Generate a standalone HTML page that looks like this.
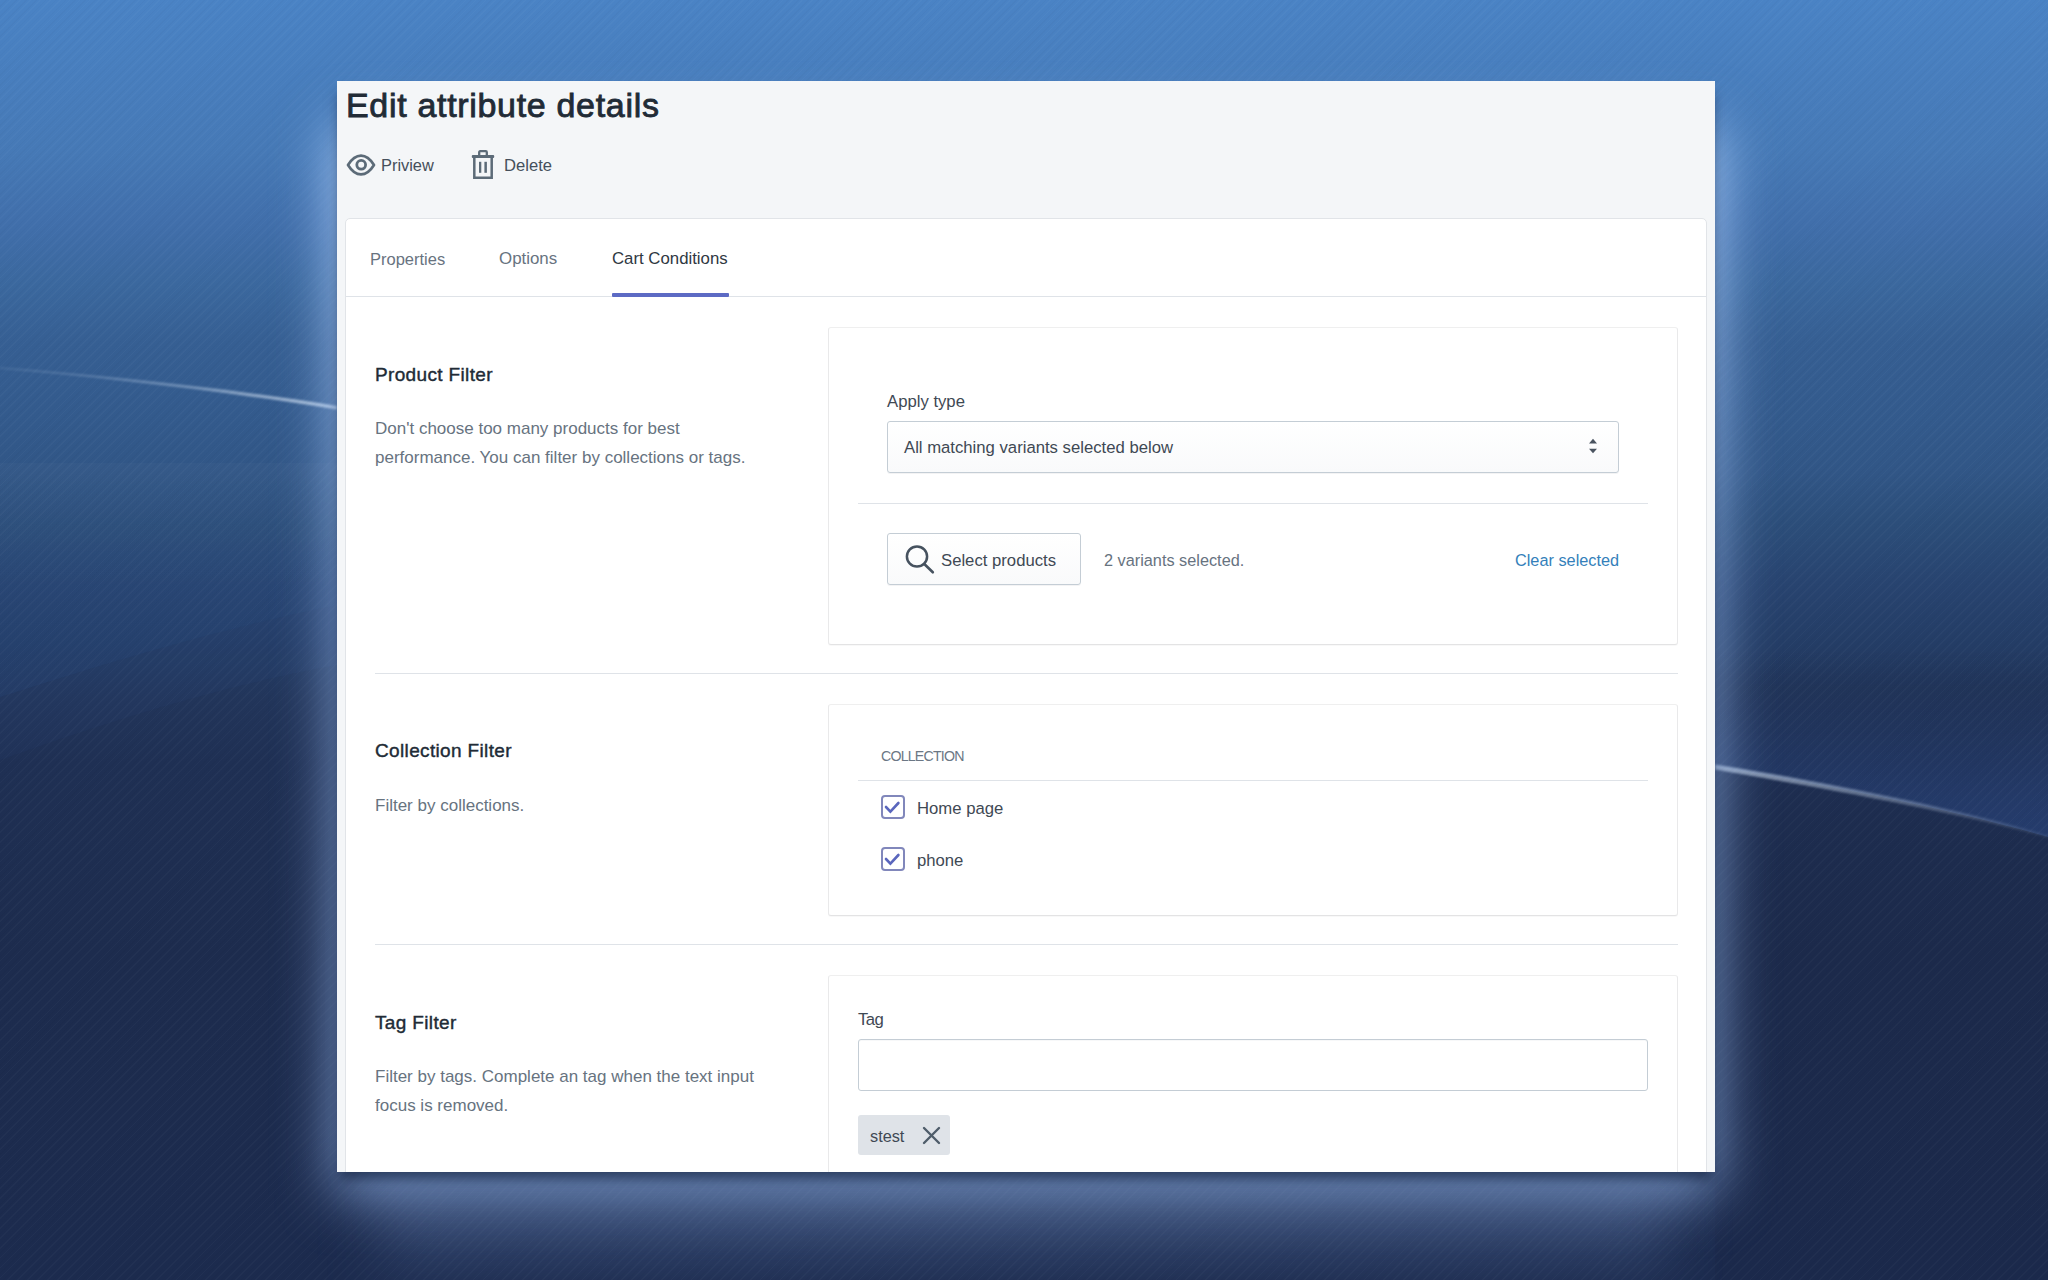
<!DOCTYPE html>
<html><head><meta charset="utf-8">
<style>
*{box-sizing:border-box;margin:0;padding:0}
html,body{width:2048px;height:1280px;overflow:hidden}
body{position:relative;font-family:"Liberation Sans",sans-serif;background:linear-gradient(180deg,#4a84c6 0px,#4577b9 150px,#3c67a5 330px,#355b96 480px,#2c4b80 600px,#233c68 720px,#1f3159 850px,#1d2d52 1000px,#1c2b4e 1280px)}
#bg{position:absolute;left:0;top:0;width:2048px;height:1280px}
#stripes{position:absolute;left:0;top:0;width:2048px;height:1280px;background:repeating-linear-gradient(135deg,rgba(255,255,255,0.022) 0 1.2px,rgba(255,255,255,0) 1.2px 4px,rgba(0,0,0,0.02) 4px 5.2px,rgba(0,0,0,0) 5.2px 7px)}
#panel{position:absolute;left:337px;top:81px;width:1378px;height:1091px;background:#f4f6f8;overflow:hidden;box-shadow:0 10px 12px -3px rgba(15,30,60,0.7);}
.abs{position:absolute;white-space:nowrap}
.h{font-size:19px;font-weight:400;color:#212b36;line-height:24px;letter-spacing:0.35px;-webkit-text-stroke:0.4px #212b36}
.d{font-size:17px;color:#67737f;line-height:29px}
.t{font-size:16.7px;color:#212b36;line-height:24px;white-space:nowrap}
.c{position:absolute;background:#fff;border:1px solid #e9e9ea;border-top-color:#efefef;border-bottom-color:#e3e3e4;border-radius:3px;box-shadow:0 1px 1px rgba(0,0,0,0.03)}
.sel{position:absolute;border:1px solid #c4cdd5;border-radius:3px;background:linear-gradient(180deg,#fff,#f9fafb);box-shadow:0 1px 0 rgba(22,29,37,0.05)}
.btn{position:absolute;border:1px solid #c4cdd5;border-radius:3px;background:linear-gradient(180deg,#fff,#f9fafb);box-shadow:0 1px 0 rgba(22,29,37,0.05)}
.cb{position:absolute;width:24px;height:24px;border:2px solid #8187bb;border-radius:4px;background:#fff}
.inp{position:absolute;border:1px solid #c4cdd5;border-radius:3px;background:#fff;box-shadow:inset 0 1px 0 rgba(99,115,129,0.05)}
.chip{position:absolute;background:#dfe3e8;border-radius:3px}

</style></head><body>
<svg id="bg" width="2048" height="1280" viewBox="0 0 2048 1280">
<defs>
<linearGradient id="gL" x1="0" y1="0" x2="0" y2="1280" gradientUnits="userSpaceOnUse">
<stop offset="0.0000" stop-color="#4a83c5"/><stop offset="0.1195" stop-color="#4679b6"/><stop offset="0.1742" stop-color="#416fab"/><stop offset="0.2227" stop-color="#3b689e"/><stop offset="0.2680" stop-color="#365f93"/><stop offset="0.3305" stop-color="#335a8c"/><stop offset="0.3695" stop-color="#315686"/><stop offset="0.4086" stop-color="#2c4e7a"/><stop offset="0.4555" stop-color="#284470"/><stop offset="0.5023" stop-color="#243d66"/><stop offset="0.5492" stop-color="#22355a"/><stop offset="0.5961" stop-color="#1f3054"/><stop offset="0.7422" stop-color="#1d2c4e"/><stop offset="1.0000" stop-color="#1c2b4e"/>
</linearGradient>
<filter id="blur2" x="-5%" y="-50%" width="110%" height="200%"><feGaussianBlur stdDeviation="0.8"/></filter>
<filter id="blur8"><feGaussianBlur stdDeviation="8"/></filter>
</defs>
<rect width="2048" height="1280" fill="url(#gL)"/>
<linearGradient id="bandR" x1="0" y1="650" x2="0" y2="830" gradientUnits="userSpaceOnUse"><stop offset="0" stop-color="#2d4c8c" stop-opacity="0"/><stop offset="1" stop-color="#2d4c8c" stop-opacity="0.45"/></linearGradient>
<linearGradient id="bandL" x1="0" y1="463" x2="0" y2="600" gradientUnits="userSpaceOnUse"><stop offset="0" stop-color="#fff" stop-opacity="0.02"/><stop offset="1" stop-color="#fff" stop-opacity="0"/></linearGradient>
<path d="M0 463 L337 463 L337 600 L0 600 Z" fill="url(#bandL)"/>
<linearGradient id="bandA" x1="0" y1="470" x2="0" y2="700" gradientUnits="userSpaceOnUse"><stop offset="0" stop-color="#3468b8" stop-opacity="0"/><stop offset="1" stop-color="#3468b8" stop-opacity="0.12"/></linearGradient>
<path d="M0 470 L337 470 L337 605 C220 628 100 665 0 697 Z" fill="url(#bandA)"/>
<path d="M0 697 C100 665 220 628 337 605 L337 665 C230 684 110 720 0 760 Z" fill="#3468b8" opacity="0.05"/>
<linearGradient id="darkR" x1="0" y1="650" x2="0" y2="800" gradientUnits="userSpaceOnUse"><stop offset="0" stop-color="#000" stop-opacity="0"/><stop offset="0.25" stop-color="#000" stop-opacity="0.1"/><stop offset="0.55" stop-color="#000" stop-opacity="0.08"/><stop offset="1" stop-color="#000" stop-opacity="0"/></linearGradient>
<path d="M1715 640 L2048 640 L2048 837 C1950 808 1800 780 1715 767 Z" fill="url(#darkR)"/>
<path d="M1715 640 C1850 660 1950 660 2048 655 L2048 837 C1950 808 1800 780 1715 767 Z" fill="url(#bandR)"/>
<path d="M1715 767 C1800 780 1950 808 2048 837 L2048 1280 L1715 1280 Z" fill="#000" opacity="0.03"/>
<!-- streaks -->
<linearGradient id="stL" x1="0" y1="0" x2="337" y2="0" gradientUnits="userSpaceOnUse"><stop offset="0" stop-color="#d5e5f8" stop-opacity="0.12"/><stop offset="0.5" stop-color="#d5e5f8" stop-opacity="0.35"/><stop offset="1" stop-color="#e0ecfa" stop-opacity="0.7"/></linearGradient>
<linearGradient id="stR" x1="1715" y1="0" x2="2048" y2="0" gradientUnits="userSpaceOnUse"><stop offset="0" stop-color="#d5e5f8" stop-opacity="0.6"/><stop offset="0.6" stop-color="#d5e5f8" stop-opacity="0.3"/><stop offset="1" stop-color="#d5e5f8" stop-opacity="0.08"/></linearGradient>
<path d="M0 367.3 C110 376 230 388.5 337 406 L337 409.5 C230 392 110 378 0 368.7 Z" fill="url(#stL)" filter="url(#blur2)"/>
<path d="M1715 764.5 C1800 778 1950 806 2048 835.5 L2048 838 C1950 810 1800 784 1715 769.5 Z" fill="url(#stR)" filter="url(#blur2)"/>
</svg>
<div id="stripes"></div>
<div id="glow" style="position:absolute;left:334px;top:128px;width:1384px;height:1067px;background:linear-gradient(180deg,rgba(175,210,255,0.95) 0px,rgba(170,205,255,0.85) 200px,rgba(160,195,250,0.7) 450px,rgba(160,195,250,0.7) 100%);filter:blur(28px)"></div><div id="glow2" style="position:absolute;left:380px;top:1190px;width:1290px;height:70px;background:rgba(150,185,245,0.2);filter:blur(30px)"></div>
<div id="panel">
  <div class="abs" id="title" style="left:9px;top:-1.5px;font-size:34px;font-weight:400;color:#212b36;letter-spacing:0.68px;line-height:50px;-webkit-text-stroke:0.85px #212b36">Edit attribute details</div>
  <svg class="abs" style="left:8.6px;top:69px" width="30" height="30" viewBox="0 0 30 30"><path d="M2 15 C6 8.5 10 5.6 15 5.6 C20 5.6 24 8.5 28 15 C24 21.5 20 24.4 15 24.4 C10 24.4 6 21.5 2 15 Z" fill="none" stroke="#5c6b78" stroke-width="2.7" stroke-linejoin="round"/><circle cx="15.2" cy="14.8" r="4.4" fill="none" stroke="#5c6b78" stroke-width="2.8"/></svg>
  <div class="abs" style="left:44px;top:72px;font-size:16.4px;color:#454f5b;line-height:24px">Priview</div>
  <svg class="abs" style="left:134px;top:69px" width="24" height="30" viewBox="0 0 24 30"><path d="M8.2 5.5 V2.2 Q8.2 1.2 9.2 1.2 H14.8 Q15.8 1.2 15.8 2.2 V5.5" fill="none" stroke="#5c6b78" stroke-width="2.3"/><rect x="0.8" y="5" width="22.4" height="3" rx="1" fill="#5c6b78"/><path d="M3.3 7.5 V27.7 H20.7 V7.5" fill="none" stroke="#5c6b78" stroke-width="2.5"/><rect x="8" y="11.8" width="2.3" height="11" fill="#5c6b78"/><rect x="13.4" y="11.8" width="2.5" height="11" fill="#5c6b78"/></svg>
  <div class="abs" style="left:167px;top:73px;font-size:16.6px;color:#454f5b;line-height:24px">Delete</div>

  <div id="card" style="position:absolute;left:8px;top:137px;width:1362px;height:1000px;background:#fff;border:1px solid #e1e4e8;border-radius:5px">
    <div style="position:absolute;left:0;top:0;width:100%;height:78px;border-bottom:1px solid #dfe3e8"></div>
    <div class="abs" style="left:24px;top:28px;font-size:16.5px;color:#68737f;line-height:24px">Properties</div>
    <div class="abs" style="left:153px;top:28px;font-size:16.9px;color:#68737f;line-height:24px">Options</div>
    <div class="abs" style="left:266px;top:28px;font-size:16.8px;color:#2f3842;line-height:24px">Cart Conditions</div>
    <div style="position:absolute;left:266px;top:73.5px;width:117px;height:4.5px;background:#5c6ac4;border-radius:1px"></div>
    <div style="position:absolute;left:1px;top:1px">
    <div class="abs h" style="left:28px;top:142.5px">Product Filter</div>
    <div class="abs d" style="left:28px;top:194px">Don't choose too many products for best<br>performance. You can filter by collections or tags.</div>
    <div class="abs h" style="left:28px;top:519.3px">Collection Filter</div>
    <div class="abs d" style="left:28px;top:571px">Filter by collections.</div>
    <div class="abs h" style="left:28px;top:791px">Tag Filter</div>
    <div class="abs d" style="left:28px;top:842px">Filter by tags. Complete an tag when the text input<br>focus is removed.</div>
    <div style="position:absolute;left:28px;top:453px;width:1303px;height:1px;background:#dfe3e8"></div>
    <div style="position:absolute;left:28px;top:724px;width:1303px;height:1px;background:#dfe3e8"></div>
    <div class="c" style="left:481px;top:107px;width:850px;height:318px"></div>
    <div class="c" style="left:481px;top:483.5px;width:850px;height:212.5px"></div>
    <div class="c" style="left:481px;top:754.5px;width:850px;height:325px"></div>
    <div class="abs t" style="left:540px;top:169.5px;color:#3f4954">Apply type</div>
    <div class="sel" style="left:540px;top:201px;width:732px;height:52px"><span class="abs t" style="left:16px;top:14px;color:#3f4954">All matching variants selected below</span><svg class="abs" style="left:700px;top:15px" width="10" height="18" viewBox="0 0 10 18"><path d="M1 6.5 L5 1.8 L9 6.5 Z M1 11.8 L5 16.3 L9 11.8 Z" fill="#4a5460"/></svg></div>
    <div style="position:absolute;left:511px;top:283px;width:790px;height:1px;background:#dfe3e8"></div>
    <div class="btn" style="left:540px;top:313px;width:194px;height:52px"><svg class="abs" style="left:16px;top:10px" width="32" height="32" viewBox="0 0 32 32"><circle cx="13" cy="12.5" r="10.1" fill="none" stroke="#46525f" stroke-width="2.5"/><path d="M20.3 20 L28.8 28.3" stroke="#46525f" stroke-width="2.6" stroke-linecap="round"/></svg><span class="abs t" style="left:53px;top:15px;color:#3f4954">Select products</span></div>
    <div class="abs d" style="left:757px;top:340px;margin-top:-14px;font-size:16.3px">2 variants selected.</div>
    <div class="abs" style="left:1168px;top:328px;font-size:16.3px;line-height:24px;color:#347fba">Clear selected</div>
    <div class="abs" style="left:534px;top:524px;font-size:14.2px;letter-spacing:-0.8px;line-height:24px;color:#6b7785">COLLECTION</div>
    <div style="position:absolute;left:511px;top:560px;width:790px;height:1px;background:#dfe3e8"></div>
    <div class="cb" style="left:534px;top:575px"><svg width="21" height="21" viewBox="0 0 21 21" style="position:absolute;left:0;top:0"><path d="M3 10 L7.4 14.6 L15.4 6" fill="none" stroke="#5a66bd" stroke-width="2.6" stroke-linecap="round" stroke-linejoin="miter"/></svg></div>
    <div class="abs t" style="left:570px;top:577px;color:#3f4954">Home page</div>
    <div class="cb" style="left:534px;top:627px"><svg width="21" height="21" viewBox="0 0 21 21" style="position:absolute;left:0;top:0"><path d="M3 10 L7.4 14.6 L15.4 6" fill="none" stroke="#5a66bd" stroke-width="2.6" stroke-linecap="round" stroke-linejoin="miter"/></svg></div>
    <div class="abs t" style="left:570px;top:629px;color:#3f4954">phone</div>
    <div class="abs t" style="left:511px;top:788px;color:#3f4954;letter-spacing:-0.5px">Tag</div>
    <div class="inp" style="left:511px;top:819px;width:790px;height:52px"></div>
    <div class="chip" style="left:511px;top:895px;width:92px;height:40px"><span class="abs t" style="left:12px;top:9px;color:#3f4954;font-size:16.3px">stest</span><svg class="abs" style="left:64px;top:11px" width="19" height="19" viewBox="0 0 19 19"><path d="M2 2 L17 17 M17 2 L2 17" stroke="#4f5d6a" stroke-width="2.4" stroke-linecap="round"/></svg></div>
    </div>
  </div>
</div>
</body></html>
